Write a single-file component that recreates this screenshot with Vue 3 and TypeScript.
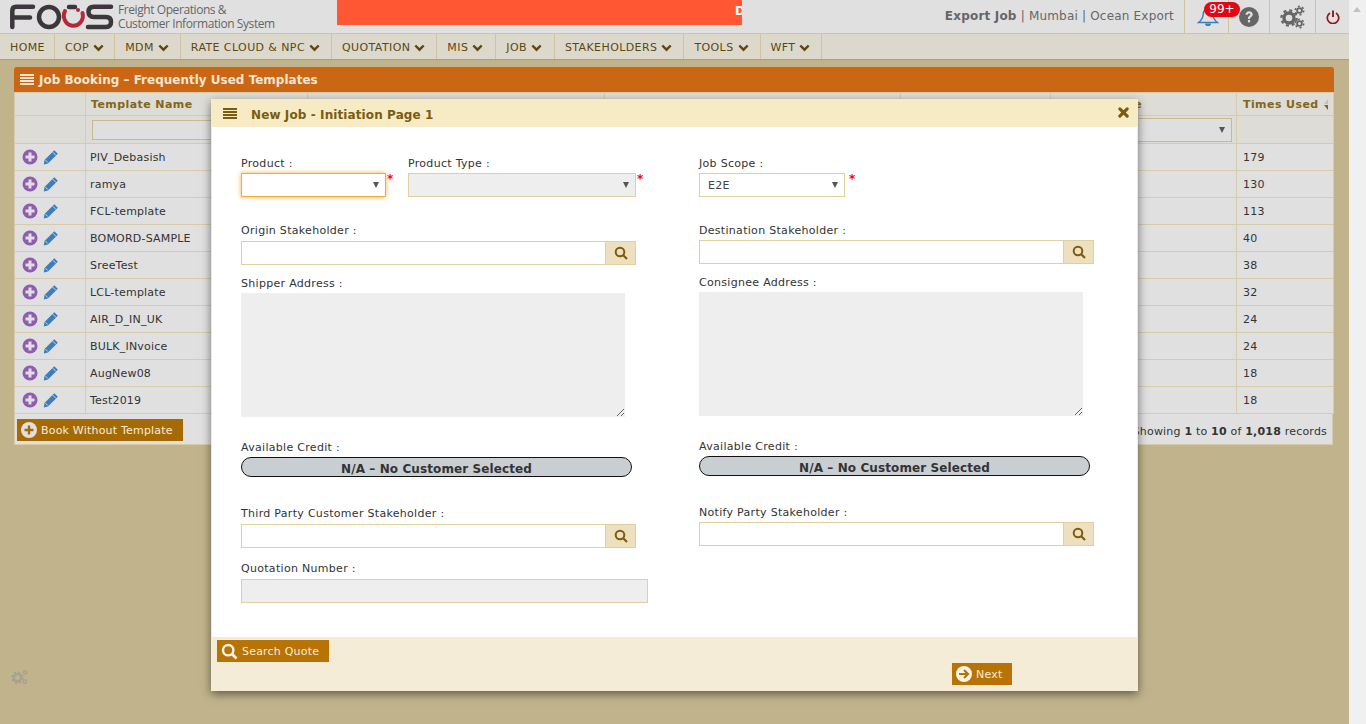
<script setup lang="ts">
const menus = [
  { name: 'HOME', arrow: false },
  { name: 'COP', arrow: true },
  { name: 'MDM', arrow: true },
  { name: 'RATE CLOUD & NPC', arrow: true },
  { name: 'QUOTATION', arrow: true },
  { name: 'MIS', arrow: true },
  { name: 'JOB', arrow: true },
  { name: 'STAKEHOLDERS', arrow: true },
  { name: 'TOOLS', arrow: true },
  { name: 'WFT', arrow: true },
]

const columns = ['', 'Template Name', 'Shipper', 'Consignee', 'Product', 'Product Type', 'Times Used']

const templates = [
  { name: 'PIV_Debasish', used: 179 },
  { name: 'ramya', used: 130 },
  { name: 'FCL-template', used: 113 },
  { name: 'BOMORD-SAMPLE', used: 40 },
  { name: 'SreeTest', used: 38 },
  { name: 'LCL-template', used: 32 },
  { name: 'AIR_D_IN_UK', used: 24 },
  { name: 'BULK_INvoice', used: 24 },
  { name: 'AugNew08', used: 18 },
  { name: 'Test2019', used: 18 },
]
</script>

<template>
  <div class="page">
    <div class="main">
      <header class="topbar">
        <div class="brand">
          <svg class="logo" width="116" height="33" viewBox="0 0 116 33">
            <g fill="none" stroke="#3b373d" stroke-width="4.500" stroke-linecap="round">
              <path d="M33 6.800H16Q12.300 6.800 12.300 11V27" />
              <path d="M14 17.500H30" />
              <ellipse cx="49" cy="17" rx="10" ry="10" />
              <path d="M69 7H75" />
              <path d="M111 6.800H94Q88.500 6.800 88.500 11.800Q88.500 17 94 17H106Q111 17 111 22Q111 27 106 27H88" />
            </g>
            <path d="M65 11A9.500 10 0 1 0 82.500 13" fill="none" stroke="#b8263c" stroke-width="4" stroke-linecap="round" />
            <circle cx="78" cy="10" r="2" fill="#b8263c" />
          </svg>
          <div class="tagline">Freight Operations &amp;<br />Customer Information System</div>
        </div>
        <div class="ticker"><span>D</span></div>
        <div class="context"><b>Export Job</b> | Mumbai | Ocean Export</div>
        <div class="tool tool-bell">
          <svg width="22" height="20" viewBox="0 0 22 20">
            <path d="M11 1.500C7.500 1.500 6.500 4 6.200 7.500C5.900 11 4.200 13.500 1.500 15.500H20.500C17.800 13.500 16.100 11 15.800 7.500C15.500 4 14.500 1.500 11 1.500Z" fill="none" stroke="#3b7fb8" stroke-width="1.500" />
            <path d="M8 16.500A3 2.600 0 0 0 14 16.500Z" fill="#3b7fb8" />
          </svg>
          <span class="badge">99+</span>
        </div>
        <div class="tool tool-help">
          <svg width="20" height="20" viewBox="0 0 20 20">
            <circle cx="10" cy="10" r="10" fill="#666" />
            <path d="M6.500 7.800C6.500 5.600 8.200 4.300 10.100 4.300C12.200 4.300 13.700 5.600 13.700 7.400C13.700 9.800 11.100 9.800 11.100 12H8.900C8.900 8.900 11.300 8.900 11.300 7.500C11.300 6.900 10.800 6.500 10 6.500C9.300 6.500 8.800 7.100 8.800 7.800Z" fill="#e0e0e0" />
            <rect x="8.900" y="13" width="2.200" height="2.400" fill="#e0e0e0" />
          </svg>
        </div>
        <div class="tool tool-gear">
          <svg width="25" height="24" viewBox="0 0 25 24">
            <g fill="none" stroke="#666">
              <circle cx="9" cy="13" r="5" stroke-width="3.400" />
              <circle cx="9" cy="13" r="7.600" stroke-width="2.400" stroke-dasharray="3 2.970" />
              <circle cx="19.500" cy="5.500" r="2.400" stroke-width="1.800" />
              <circle cx="19.500" cy="5.500" r="4.200" stroke-width="1.600" stroke-dasharray="2 2.400" />
              <circle cx="19.500" cy="18.500" r="2.400" stroke-width="1.800" />
              <circle cx="19.500" cy="18.500" r="4.200" stroke-width="1.600" stroke-dasharray="2 2.400" />
            </g>
          </svg>
        </div>
        <div class="tool tool-power">
          <svg width="14" height="14" viewBox="0 0 14 14">
            <path d="M4 3A5.700 5.700 0 1 0 10 3" fill="none" stroke="#8c1c1c" stroke-width="1.700" />
            <path d="M7 0.500V7" stroke="#8c1c1c" stroke-width="1.900" />
          </svg>
        </div>
      </header>

      <nav class="menu">
        <div v-for="item in menus" :key="item.name" class="menu-item">
          {{ item.name }}
          <svg v-if="item.arrow" class="chevron" width="11" height="8" viewBox="0 0 11 8">
            <path d="M1.300 1.500L5.500 5.700L9.700 1.500" fill="none" stroke="#5c4712" stroke-width="2.400" />
          </svg>
        </div>
      </nav>

      <section class="panel">
        <div class="panel-title">
          <svg width="14" height="11" viewBox="0 0 14 11" fill="#f0e6d2">
            <rect y="0" width="14" height="2" /><rect y="3" width="14" height="2" />
            <rect y="6" width="14" height="2" /><rect y="9" width="14" height="2" />
          </svg>
          Job Booking – Frequently Used Templates
        </div>
        <table class="grid">
          <colgroup>
            <col class="col-action" /><col class="col-name" /><col class="col-a" /><col class="col-b" />
            <col class="col-c" /><col class="col-d" /><col class="col-used" />
          </colgroup>
          <thead>
            <tr class="head-row">
              <th v-for="col in columns" :key="col">
                {{ col }}
                <span v-if="col === 'Times Used'" class="sort"></span>
              </th>
            </tr>
            <tr class="filter-row">
              <th></th>
              <th><input class="filter-input" /></th>
              <th></th>
              <th></th>
              <th></th>
              <th>
                <div class="select-wrap filter-select"><select class="select"></select></div>
              </th>
              <th></th>
            </tr>
          </thead>
          <tbody>
            <tr v-for="row in templates" :key="row.name">
              <td class="actions">
                <svg width="16" height="16" viewBox="0 0 16 16">
                  <circle cx="8" cy="8" r="7.500" fill="#8f5cb0" />
                  <path d="M3.500 8H12.500M8 3.500V12.500" stroke="#e0e0e0" stroke-width="3" />
                </svg>
                <svg width="16" height="16" viewBox="0 0 16 16">
                  <path d="M11.300 1.200L14.800 4.700L5 14.500L0.800 15.400L1.500 11Z" fill="#3d7eb8" />
                  <path d="M9.800 3.200L13 6.400M2.500 11.200L4.800 13.500" stroke="#e0e0e0" stroke-width="0.900" />
                </svg>
              </td>
              <td>{{ row.name }}</td>
              <td></td>
              <td></td>
              <td></td>
              <td></td>
              <td>{{ row.used }}</td>
            </tr>
          </tbody>
        </table>
        <div class="panel-foot">
          <button class="action-btn book-btn">
            <svg width="16" height="16" viewBox="0 0 16 16">
              <circle cx="8" cy="8" r="8" fill="#e0e0e0" />
              <path d="M3.500 8H12.500M8 3.500V12.500" stroke="#a66a05" stroke-width="2.400" />
            </svg>
            <span>Book Without Template</span>
          </button>
          <div class="records">Showing <b>1</b> to <b>10</b> of <b>1,018</b> records</div>
        </div>
      </section>
    </div>

    <aside class="scrollbar"><span class="scroll-up"></span></aside>

    <svg class="side-gear" width="18" height="18" viewBox="0 0 25 24">
      <g fill="none" stroke="#a3a390">
        <circle cx="9" cy="13" r="5" stroke-width="3.400" />
        <circle cx="9" cy="13" r="7.600" stroke-width="2.400" stroke-dasharray="3 2.970" />
        <circle cx="19.500" cy="5.500" r="2.400" stroke-width="1.800" />
        <circle cx="19.500" cy="18.500" r="2.400" stroke-width="1.800" />
      </g>
    </svg>

    <div class="modal">
      <div class="modal-title">
        <svg width="14" height="11" viewBox="0 0 14 11" fill="#7a5c10">
          <rect y="0" width="14" height="2" /><rect y="3" width="14" height="2" />
          <rect y="6" width="14" height="2" /><rect y="9" width="14" height="2" />
        </svg>
        <span class="modal-name">New Job - Initiation Page 1</span>
        <svg class="modal-close" width="11" height="11" viewBox="0 0 12 12">
          <path d="M2 2L10 10M10 2L2 10" stroke="#7a5c10" stroke-width="3.400" stroke-linecap="round" />
        </svg>
      </div>

      <div class="modal-body">
        <div class="column">
          <div class="pair">
            <div class="product">
              <label>Product :</label>
              <div class="select-wrap select-product"><select class="select select-focus"></select></div>
            </div>
            <span class="star">*</span>
            <div class="product-type">
              <label>Product Type :</label>
              <div class="select-wrap select-type"><select class="select select-off"></select></div>
            </div>
            <span class="star">*</span>
          </div>

          <label class="gap-stake">Origin Stakeholder :</label>
          <div class="lookup lookup-low">
            <input class="lookup-input" />
            <button class="lookup-btn">
              <svg width="14" height="14" viewBox="0 0 14 14"><circle cx="6" cy="6" r="4.300" fill="none" stroke="#7a5c10" stroke-width="2" /><path d="M9 9L13 13" stroke="#7a5c10" stroke-width="2.200" /></svg>
            </button>
          </div>

          <label class="gap-address">Shipper Address :</label>
          <textarea class="address" readonly></textarea>

          <label class="gap-credit">Available Credit :</label>
          <div class="credit">N/A – No Customer Selected</div>

          <label class="gap-third">Third Party Customer Stakeholder :</label>
          <div class="lookup lookup-low">
            <input class="lookup-input" />
            <button class="lookup-btn">
              <svg width="14" height="14" viewBox="0 0 14 14"><circle cx="6" cy="6" r="4.300" fill="none" stroke="#7a5c10" stroke-width="2" /><path d="M9 9L13 13" stroke="#7a5c10" stroke-width="2.200" /></svg>
            </button>
          </div>

          <label class="gap-quote">Quotation Number :</label>
          <input class="quote-input" readonly />
        </div>

        <div class="column">
          <div class="pair">
            <div class="product">
              <label>Job Scope :</label>
              <div class="select-wrap select-scope">
                <select class="select"><option>E2E</option></select>
              </div>
            </div>
            <span class="star star-scope">*</span>
          </div>

          <label class="gap-stake">Destination Stakeholder :</label>
          <div class="lookup">
            <input class="lookup-input" />
            <button class="lookup-btn">
              <svg width="14" height="14" viewBox="0 0 14 14"><circle cx="6" cy="6" r="4.300" fill="none" stroke="#7a5c10" stroke-width="2" /><path d="M9 9L13 13" stroke="#7a5c10" stroke-width="2.200" /></svg>
            </button>
          </div>

          <label class="gap-address">Consignee Address :</label>
          <textarea class="address" readonly></textarea>

          <label class="gap-credit">Available Credit :</label>
          <div class="credit">N/A – No Customer Selected</div>

          <label class="gap-third">Notify Party Stakeholder :</label>
          <div class="lookup">
            <input class="lookup-input" />
            <button class="lookup-btn">
              <svg width="14" height="14" viewBox="0 0 14 14"><circle cx="6" cy="6" r="4.300" fill="none" stroke="#7a5c10" stroke-width="2" /><path d="M9 9L13 13" stroke="#7a5c10" stroke-width="2.200" /></svg>
            </button>
          </div>
        </div>
      </div>

      <div class="modal-foot">
        <button class="action-btn quote-btn">
          <svg width="17" height="17" viewBox="0 0 17 17"><circle cx="7.200" cy="7.200" r="5.200" fill="none" stroke="#fdf6e6" stroke-width="2.400" /><path d="M11 11L15.500 15.500" stroke="#fdf6e6" stroke-width="2.800" /></svg>
          <span>Search Quote</span>
        </button>
        <button class="action-btn next-btn">
          <svg width="16" height="16" viewBox="0 0 16 16">
            <circle cx="8" cy="8" r="8" fill="#fdf6e6" />
            <path d="M3 8H11M8 4L12 8L8 12" fill="none" stroke="#b87305" stroke-width="2.200" />
          </svg>
          <span>Next</span>
        </button>
      </div>
    </div>
  </div>
</template>

<style>
html, body {
  margin: 0;
  overflow: hidden;
}
</style>

<style scoped>
.page {
  position: relative;
  display: flex;
  height: 724px;
  overflow: hidden;
  background: #c1b48c;
  font-family: "DejaVu Sans", Verdana, sans-serif;
  font-size: 11px;
  color: #333;
}
.main {
  flex: 1;
  min-width: 0;
}
.scrollbar {
  width: 17px;
  background: #f0f0f0;
  position: relative;
}
.scroll-up {
  position: absolute;
  left: 4px;
  top: 7px;
  border-left: 4px solid transparent;
  border-right: 4px solid transparent;
  border-bottom: 5px solid #c0c0c0;
}

.topbar {
  display: flex;
  height: 33px;
  background: #e0e0e0;
  border-bottom: 1px solid #cfc3a0;
}
.brand {
  display: flex;
  width: 337px;
  flex: none;
}
.logo {
  flex: none;
}
.tagline {
  margin: 3px 0 0 2px;
  font-family: "Open Sans", sans-serif;
  font-size: 12px;
  line-height: 13.500px;
  letter-spacing: -0.420px;
  color: #666;
  white-space: nowrap;
}
.ticker {
  flex: none;
  width: 405px;
  height: 25px;
  background: #ff5733;
  color: #fff;
  font-weight: bold;
  font-size: 12px;
  line-height: 22px;
  text-align: right;
  overflow: hidden;
}
.ticker span {
  margin-right: -3px;
}
.context {
  flex: 1;
  text-align: right;
  padding-right: 10px;
  font-size: 12px;
  line-height: 33px;
  letter-spacing: 0.190px;
  color: #666;
  white-space: nowrap;
}
.tool {
  display: flex;
  align-items: center;
  justify-content: center;
  position: relative;
  flex: none;
  border-left: 1px solid #cfc3a0;
  box-sizing: border-box;
  height: 33px;
}
.tool-bell { width: 44px; justify-content: flex-start; padding-left: 12px; }
.tool-help { width: 41px; }
.tool-gear { width: 46px; }
.tool-power { width: 34px; }
.badge {
  position: absolute;
  left: 19px;
  top: 2px;
  z-index: 1;
  width: 36px;
  height: 15px;
  border-radius: 8px;
  background: #e30613;
  color: #fff;
  font-size: 12px;
  line-height: 14px;
  text-align: center;
}

.menu {
  display: flex;
  height: 25px;
  background: #dcd9cc;
  box-shadow: 0 1px 1px rgba(0, 0, 0, 0.1);
}
.menu-item {
  display: flex;
  align-items: center;
  gap: 4px;
  padding: 1px 11px 0 10px;
  border-right: 1px solid #cfc3a0;
  color: #5c4712;
  letter-spacing: 0.400px;
  white-space: nowrap;
}
.menu-item:first-child {
  padding-right: 9px;
}
.menu-item:nth-child(2) {
  padding-right: 10px;
}
.menu-item:nth-child(6),
.menu-item:nth-child(7) {
  padding-right: 12px;
}
.chevron {
  margin-top: 1px;
}

.panel {
  width: 1320px;
  margin: 8px 0 0 14px;
}
.panel-title {
  display: flex;
  align-items: center;
  gap: 5px;
  height: 25px;
  padding-left: 6px;
  background: #cb6714;
  border-radius: 3px 3px 0 0;
  color: #f0e6d2;
  font-weight: bold;
  font-size: 12px;
}
.grid {
  width: 1319px;
  border-collapse: collapse;
  table-layout: fixed;
  background: #e0e0e0;
}
.col-action { width: 71px; }
.col-name { width: 222px; }
.col-a { width: 297px; }
.col-b { width: 296px; }
.col-c { width: 150px; }
.col-d { width: 186px; }
.col-used { width: 97px; }
.grid th,
.grid td {
  border: 1px solid #d6cbaa;
  padding: 0 4px;
  text-align: left;
  box-sizing: border-box;
  white-space: nowrap;
  overflow: hidden;
}
.grid th {
  background: #dedcd7;
}
.head-row th {
  height: 23px;
  padding-left: 5px;
  color: #836616;
  font-weight: bold;
  letter-spacing: 0.420px;
  position: relative;
}
.head-row th:last-child,
.grid td:last-child {
  padding-left: 6px;
}
.filter-row th {
  height: 28px;
}
.grid td {
  height: 27px;
  letter-spacing: 0.200px;
}
.grid .actions {
  padding: 2px 0 0 7px;
}
.actions svg {
  margin-right: 5px;
}
.sort {
  position: absolute;
  right: 5px;
  top: 6px;
  width: 0;
  border-left: 4px solid transparent;
  border-bottom: 5px solid #c0c0c0;
}
.sort::after {
  content: "";
  position: absolute;
  left: -4px;
  top: 6px;
  border-left: 4px solid transparent;
  border-top: 5px solid #836616;
}
.filter-input {
  display: block;
  width: 100%;
  height: 20px;
  box-sizing: border-box;
  margin-left: 2px;
  border: 1px solid #c9b98c;
  background: #dfdfdf;
}
.filter-select {
  height: 20px;
}
.filter-select .select {
  background: #dfdfdf;
  border-color: #c9b98c;
}
.panel-foot {
  display: flex;
  align-items: center;
  justify-content: space-between;
  width: 1319px;
  height: 31px;
  box-sizing: border-box;
  padding: 1px 5px 0 2px;
  background: #e0e0e0;
  border: 1px solid #d6cbaa;
  border-top: 0;
}
.records {
  margin-top: 4px;
  letter-spacing: 0.200px;
  color: #333;
}

.action-btn {
  display: flex;
  align-items: center;
  gap: 4px;
  height: 22px;
  padding: 0 4px;
  border: 0;
  color: #f6ecd8;
  font: inherit;
  letter-spacing: 0.200px;
  white-space: nowrap;
}
.action-btn span {
  margin-top: 1px;
}
.book-btn {
  width: 166px;
  background: #a66a05;
}
.quote-btn {
  width: 112px;
  background: #b87305;
}
.next-btn {
  position: absolute;
  left: 741px;
  top: 26px;
  width: 60px;
  background: #b87305;
}

.side-gear {
  position: absolute;
  left: 11px;
  top: 668px;
}

.modal {
  position: absolute;
  left: 211px;
  top: 99px;
  width: 927px;
  height: 592px;
  display: flex;
  flex-direction: column;
  background: #fff;
  box-shadow: 0 3px 9px rgba(0, 0, 0, 0.5);
}
.modal-title {
  display: flex;
  align-items: center;
  flex: none;
  height: 28px;
  padding: 1px 9px 0 12px;
  box-sizing: border-box;
  background: #f6ebc5;
  color: #7a5c10;
  font-weight: bold;
  font-size: 12px;
  letter-spacing: 0.100px;
}
.modal-name {
  flex: 1;
  margin: 2px 0 0 14px;
}
.modal-close {
  margin-top: -2px;
}
.modal-body {
  flex: 1;
  display: grid;
  grid-template-columns: 458px 1fr;
  padding: 29px 0 0 29px;
  border-left: 1px solid #f6ebc5;
  border-right: 1px solid #f6ebc5;
  box-sizing: border-box;
  min-height: 0;
}
.column {
  display: flex;
  flex-direction: column;
  align-items: flex-start;
}
label {
  display: block;
  height: 14px;
  line-height: 16px;
  letter-spacing: 0.300px;
  color: #333;
}
.pair {
  display: flex;
  align-items: flex-start;
}
.product-type {
  margin-left: 14px;
}
.star {
  margin-top: 16px;
  margin-left: 1px;
  color: #f00;
  font-weight: bold;
  font-size: 12px;
  line-height: 14px;
  width: 7px;
}
.star-scope {
  margin-left: 4px;
}
.select-wrap {
  position: relative;
  margin-top: 3px;
  height: 24px;
}
.select-wrap::after {
  content: "";
  position: absolute;
  right: 7px;
  top: 50%;
  margin-top: -3px;
  border-left: 3.500px solid transparent;
  border-right: 3.500px solid transparent;
  border-top: 6px solid #555;
  pointer-events: none;
}
.filter-select {
  margin-top: 0;
}
.select-product { width: 145px; }
.select-type { width: 228px; }
.select-scope { width: 146px; }
.select {
  appearance: none;
  display: block;
  width: 100%;
  height: 100%;
  box-sizing: border-box;
  padding: 0 8px;
  border: 1px solid #e0cfa0;
  border-radius: 0;
  background: #fff;
  color: #444;
  font: inherit;
  letter-spacing: 0.300px;
}
.select-focus {
  border-color: #f4a93c;
  box-shadow: 0 0 5px #f8b455;
}
.select-off {
  background: #eee;
}
.gap-stake { margin-top: 26px; }
.gap-address { margin-top: 11px; }
.gap-credit { margin-top: 23px; }
.gap-third { margin-top: 29px; }
.gap-quote { margin-top: 13px; }
.lookup {
  display: flex;
  width: 395px;
  height: 24px;
  margin-top: 3px;
  flex: none;
}
.lookup-low {
  margin-top: 4px;
}
.lookup-input {
  flex: 1;
  min-width: 0;
  box-sizing: border-box;
  border: 1px solid #e0cfa0;
  border-right: 0;
  background: #fff;
}
.lookup-btn {
  display: flex;
  align-items: center;
  justify-content: center;
  width: 31px;
  padding: 0;
  box-sizing: border-box;
  border: 1px solid #e0cfa0;
  background: #eee0bf;
}
.address {
  display: block;
  flex: none;
  width: 384px;
  height: 124px;
  margin-top: 3px;
  padding: 0;
  box-sizing: border-box;
  border: 0;
  outline: 0;
  background: #eee;
  resize: both;
}
.credit {
  width: 391px;
  height: 20px;
  margin-top: 3px;
  box-sizing: border-box;
  border: 1px solid #111;
  border-radius: 10px;
  background: #c9ced2;
  color: #333;
  font-weight: bold;
  font-size: 12px;
  line-height: 22px;
  letter-spacing: 0.100px;
  text-align: center;
}
.quote-input {
  width: 407px;
  height: 24px;
  margin-top: 4px;
  flex: none;
  box-sizing: border-box;
  border: 1px solid #e0cfa0;
  background: #eee;
}
.modal-foot {
  position: relative;
  flex: none;
  height: 54px;
  padding: 3px 0 0 6px;
  box-sizing: border-box;
  background: #f4ecd7;
}
</style>
